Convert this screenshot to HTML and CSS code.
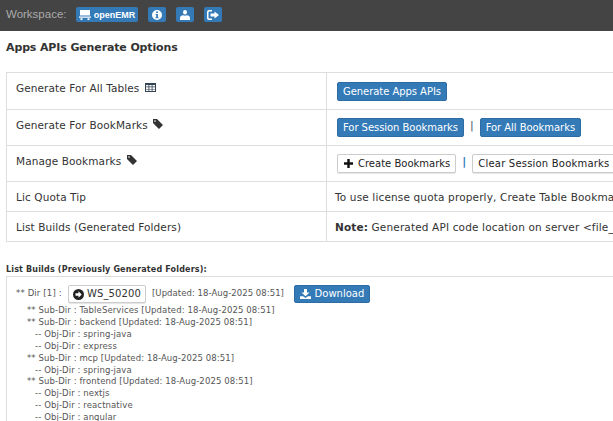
FILE: index.html
```html
<!DOCTYPE html>
<html lang="en">
<head>
<meta charset="utf-8">
<title>Apps APIs Generate Options</title>
<link rel="stylesheet" href="styles.css">
</head>
<body>
<header class="topbar">
  <span class="ws-label">Workspace:</span>
  <span class="hbtn hbtn-name"><svg class="ic" width="12" height="10" viewBox="0 0 12 10"><path fill="#fff" d="M1 0h10v5.500H1zM0 6.500h12v1.200H0zM1.500 8.300h2V10h-2zM8.500 8.300h2V10h-2z"/></svg>openEMR</span>
  <span class="hbtn"><svg width="10" height="10" viewBox="0 0 11 11"><path fill="#fff" fill-rule="evenodd" d="M5.500 0a5.500 5.500 0 1 0 0 11 5.500 5.500 0 0 0 0-11zM4.500 1.700h2v1.600h-2zM4 4.300h2.500v3.700h.7v1.200H3.900V8h.7V5.500H4z"/></svg></span>
  <span class="hbtn"><svg width="10" height="10" viewBox="0 0 10 10"><path fill="#fff" d="M3 2.300a2 2.300 0 1 1 4 0 2 2.300 0 1 1-4 0zM0 10V7.700C0 6.300 1.500 5.600 3.200 5.200c1 .6 2.600.6 3.600 0C8.500 5.600 10 6.300 10 7.700V10z"/></svg></span>
  <span class="hbtn"><svg width="12" height="10" viewBox="0 0 12 10"><path fill="#fff" d="M2 0h3v1.400H2.500a1 1 0 0 0-1 1v5.200a1 1 0 0 0 1 1H5V10H2a2 2 0 0 1-2-2V2a2 2 0 0 1 2-2zM7.500 1.500L12 5 7.500 8.500V6.500H3.500v-3h4z"/></svg></span>
</header>
<main class="content">
  <h1 class="title">Apps APIs Generate Options</h1>
  <div class="options">
    <div class="row row-a">
      <div class="cell-l">Generate For All Tables <svg class="ic-inline" width="11" height="9" viewBox="0 0 11 9"><path fill="#345" fill-rule="evenodd" d="M0 0h11v9H0zM1 2v1.600h2.500V2zM4.300 2v1.600h2.400V2zM7.500 2v1.600H10V2zM1 4.300v1.600h2.500V4.300zM4.300 4.300v1.600h2.400V4.300zM7.500 4.300v1.600H10V4.300zM1 6.500V8h2.500V6.500zM4.300 6.500V8h2.400V6.500zM7.500 6.500V8H10V6.500z"/></svg></div>
      <div class="cell-r"><span class="btn btn-blue">Generate Apps APIs</span></div>
    </div>
    <div class="row row-b">
      <div class="cell-l">Generate For BookMarks <svg class="ic-inline" width="10" height="10" viewBox="0 0 10 10"><path fill="#333" d="M0 0h4l6 6-4 4-6-6zM2 1.300a.8.800 0 1 0 0 1.600.8.800 0 0 0 0-1.600z"/></svg></div>
      <div class="cell-r"><span class="btn btn-blue">For Session Bookmarks</span><span class="sep sep-dark">|</span><span class="btn btn-blue">For All Bookmarks</span></div>
    </div>
    <div class="row row-b">
      <div class="cell-l">Manage Bookmarks <svg class="ic-inline" width="10" height="10" viewBox="0 0 10 10"><path fill="#333" d="M0 0h4l6 6-4 4-6-6zM2 1.300a.8.800 0 1 0 0 1.600.8.800 0 0 0 0-1.600z"/></svg></div>
      <div class="cell-r"><span class="btn btn-white btn-create"><svg class="ic ic-plus" width="9" height="9" viewBox="0 0 9 9"><path fill="#111" d="M3.300 0h2.400v3.300H9v2.400H5.700V9H3.300V5.700H0V3.300h3.300z"/></svg>Create Bookmarks</span><span class="sep">|</span><span class="btn btn-white btn-clear">Clear Session Bookmarks</span></div>
    </div>
    <div class="row row-c">
      <div class="cell-l">Lic Quota Tip</div>
      <div class="cell-r cell-text">To use license quota properly, Create Table Bookmarks and generate only what you need</div>
    </div>
    <div class="row row-c">
      <div class="cell-l">List Builds (Generated Folders)</div>
      <div class="cell-r cell-text"><b>Note:</b> Generated API code location on server &lt;file_path&gt;/generated/output/folder</div>
    </div>
  </div>
  <h2 class="subtitle">List Builds (Previously Generated Folders):</h2>
  <div class="builds">
    <div class="dir"><span class="dir-label">** Dir [1] :</span><span class="btn btn-white btn-dir"><svg class="ic" width="11" height="11" viewBox="0 0 11 11"><path fill="#222" fill-rule="evenodd" d="M5.500 0a5.500 5.500 0 1 0 0 11 5.500 5.500 0 0 0 0-11zM5.500 2.300l3.200 3.200-3.200 3.200V6.700H2.500V4.300h3z"/></svg>WS_50200</span><span class="dir-date">[Updated: 18-Aug-2025 08:51]</span><span class="btn btn-blue btn-dl"><svg class="ic" width="11" height="10" viewBox="0 0 11 10"><path fill="#fff" d="M4 0h3v3.500h2.500L5.500 7.300 1.500 3.500H4zM0 7.200h3l2.500 1.800L8 7.200h3V10H0z"/></svg>Download</span></div>
    <div class="sub">** Sub-Dir : TableServices [Updated: 18-Aug-2025 08:51]</div>
    <div class="sub">** Sub-Dir : backend [Updated: 18-Aug-2025 08:51]</div>
    <div class="obj">-- Obj-Dir : spring-java</div>
    <div class="obj">-- Obj-Dir : express</div>
    <div class="sub">** Sub-Dir : mcp [Updated: 18-Aug-2025 08:51]</div>
    <div class="obj">-- Obj-Dir : spring-java</div>
    <div class="sub">** Sub-Dir : frontend [Updated: 18-Aug-2025 08:51]</div>
    <div class="obj">-- Obj-Dir : nextjs</div>
    <div class="obj">-- Obj-Dir : reactnative</div>
    <div class="obj">-- Obj-Dir : angular</div>
  </div>
</main>
</body>
</html>
```
FILE: styles.css
```css
html, body { margin: 0; padding: 0; height: 421px; overflow: hidden; background: #fff; }
body { font-family: "DejaVu Sans", sans-serif; color: #333; font-size: 11px; }
.topbar { height: 31px; background: #444; display: flex; align-items: center; padding-left: 6px; box-sizing: border-box; }
.ws-label { font-family: "Liberation Sans", sans-serif; font-size: 11.500px; color: #aaa; width: 70px; flex: none; position: relative; top: -2px; }
.hbtn { height: 15px; width: 18px; background: #337ab7; border-radius: 2px; color: #fff; display: inline-flex; align-items: center; justify-content: center; font-weight: bold; font-size: 9px; margin-right: 10px; font-family: "Liberation Sans", sans-serif; position: relative; top: -1px; }
.hbtn-name { width: 62px; }
.ic { margin-right: 3px; flex: none; }
.ic-plus { margin-right: 5px; margin-left: 1px; }
.content { padding: 0 0 0 6px; width: 900px; }
.title { margin: 0; padding-top: 10px; height: 41px; box-sizing: border-box; font-size: 11px; line-height: 13px; font-weight: bold; color: #333; letter-spacing: -.13px; }
.options { border-top: 1px solid #ddd; border-left: 1px solid #ddd; }
.row { display: flex; border-bottom: 1px solid #ddd; box-sizing: border-box; }
.row-a { height: 37px; }
.row-b { height: 36px; }
.row-c { height: 30px; }
.cell-l { width: 320px; box-sizing: border-box; padding: 8px 0 0 9px; border-right: 1px solid #ddd; font-size: 10.500px; line-height: 14px; letter-spacing: .1px; }
.cell-r { padding: 9px 0 0 10px; display: flex; align-items: flex-start; white-space: nowrap; }
.row-b .cell-r { padding-top: 8px; }
.row-c .cell-text { padding: 8px 0 0 8px; display: block; font-size: 10.500px; line-height: 14px; letter-spacing: .15px; }
.ic-inline { margin-left: 2px; }
.btn { display: inline-flex; align-items: center; height: 19px; padding: 0 5px; border-radius: 2px; box-sizing: border-box; font-size: 10px; }
.btn-blue { background: #337ab7; border: 1px solid #2e6da4; color: #fff; letter-spacing: -.05px; }
.btn-white { background: #fff; border: 1px solid #ccc; color: #222; box-shadow: 0 1px 0 #e6e6e6; }
.btn-create { letter-spacing: 0; }
.btn-clear { letter-spacing: .2px; }
.sep { color: #337ab7; margin: 0 6px; font-size: 11px; line-height: 15px; font-weight: bold; }
.sep-dark { color: #456; font-weight: normal; }
.subtitle { margin: 0; padding-top: 23px; font-size: 8px; line-height: 10px; font-weight: bold; color: #333; letter-spacing: .17px; }
.builds { margin-top: 1px; border: 1px solid #ddd; padding: 8px 9px; height: 160px; font-size: 8.500px; line-height: 11.900px; color: #555; letter-spacing: .1px; }
.dir { display: flex; align-items: center; gap: 5px; height: 18px; margin-bottom: 2px; }
.dir-label { width: 47px; flex: none; letter-spacing: .15px; }
.btn-dir { height: 18px; width: 78px; font-size: 10px; color: #333; letter-spacing: .1px; padding: 0 4px; flex: none; }
.dir-date { margin-left: 1px; letter-spacing: .05px; }
.btn-dl { margin-left: 5px; font-size: 10px; width: 76px; height: 18px; justify-content: center; letter-spacing: 0; }
.btn-dl .ic { margin-right: 4px; }
.sub { padding-left: 11px; }
.obj { padding-left: 19px; }
```
